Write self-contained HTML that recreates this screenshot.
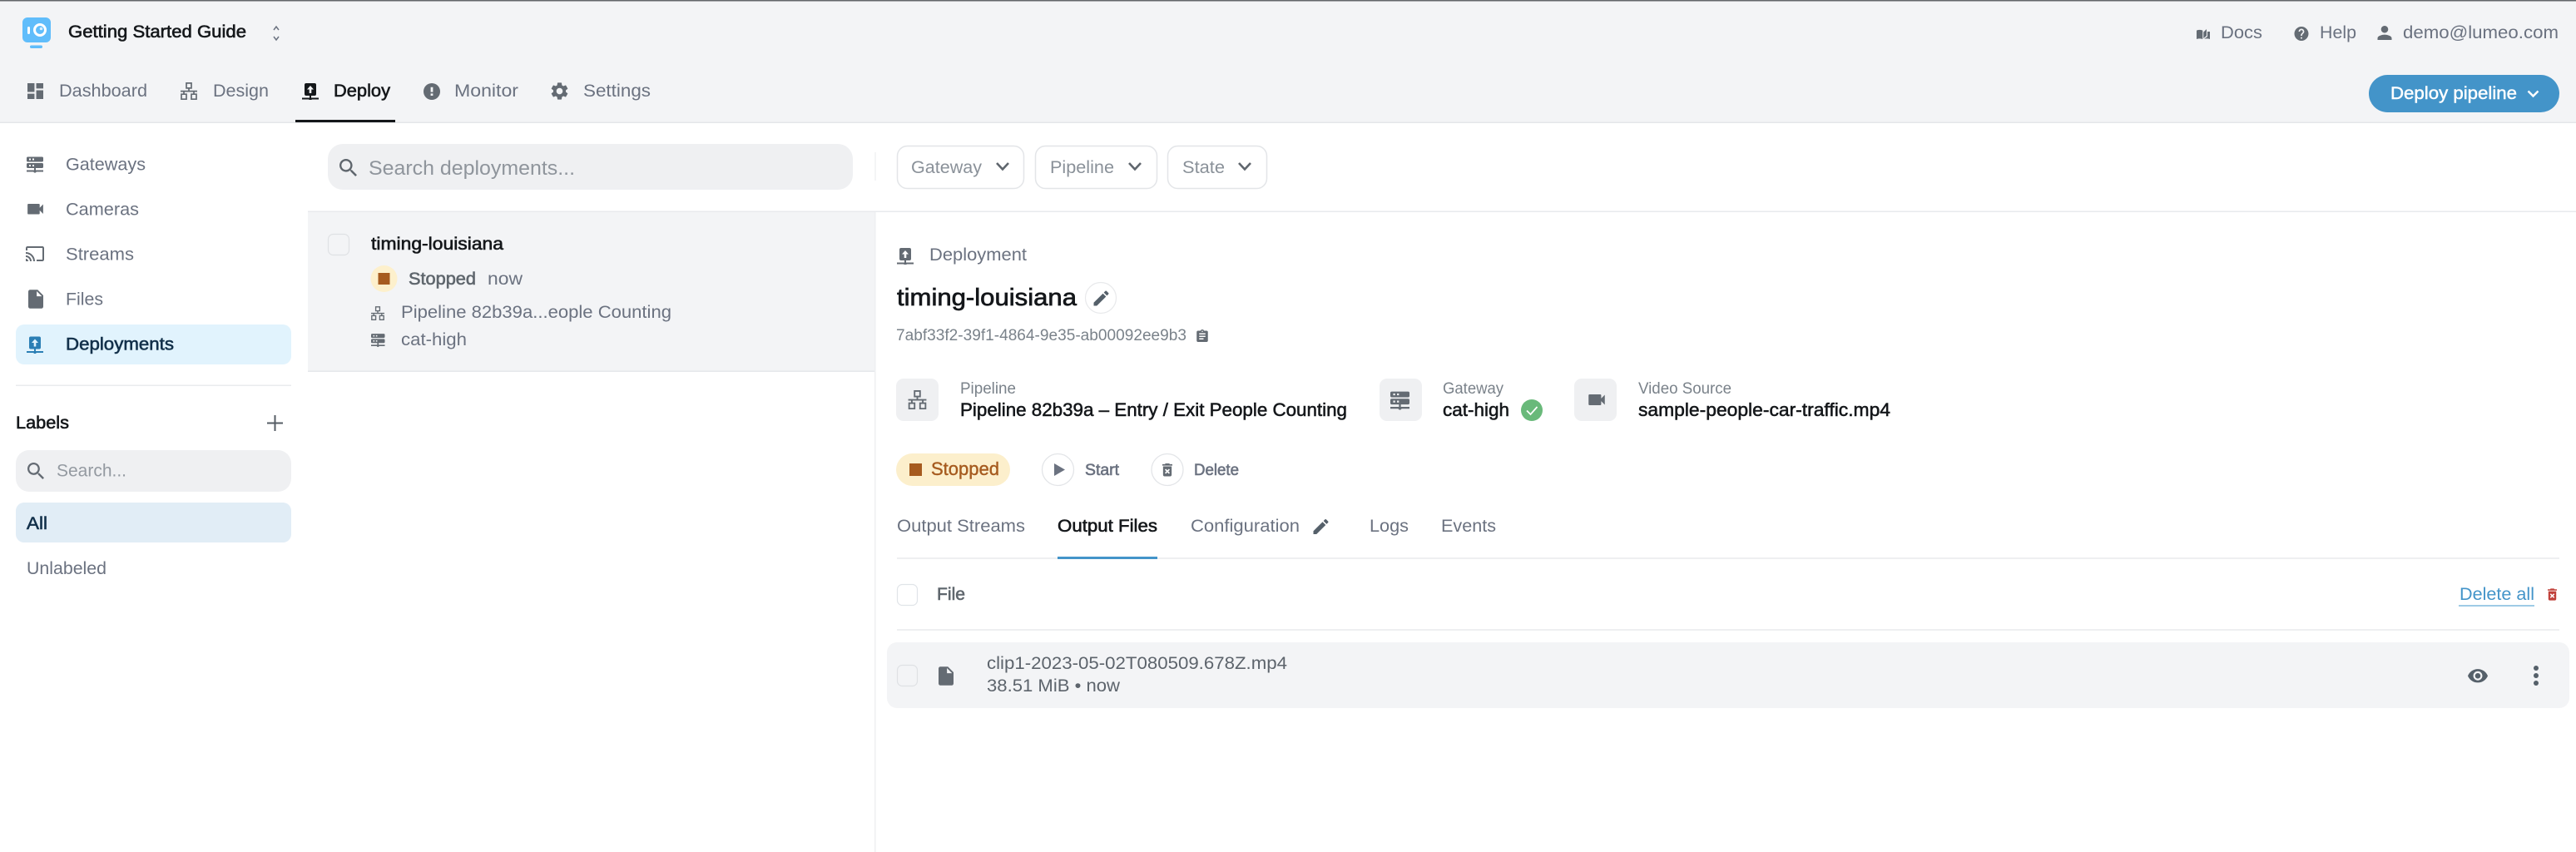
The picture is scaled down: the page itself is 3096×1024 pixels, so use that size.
<!DOCTYPE html>
<html lang="en"><head><meta charset="utf-8"><title>Deployments</title>
<style>
html,body{margin:0;padding:0;background:#fff;width:3096px;height:1024px;overflow:hidden}
svg{display:block}
text{font-family:"Liberation Sans",sans-serif;font-size:21px;fill:#6b7280}
.m{stroke-width:.6px;paint-order:stroke}
.d{fill:#14171a}.d.m{stroke:#14171a}
.g.m{stroke:#6b7280}
.s{font-size:19px}
.p{fill:#949aa1}
</style></head><body>
<svg width="3096" height="1024" viewBox="0 0 3096 1024" xmlns="http://www.w3.org/2000/svg">
<defs>
<symbol id="dash" viewBox="3 3 18 18"><path d="M3 13h8V3H3v10zm0 8h8v-6H3v6zm10 0h8V11h-8v10zm0-18v6h8V3h-8z"/></symbol>
<symbol id="deploy" viewBox="0 0 20 20"><path fill-rule="evenodd" d="M5 0h10a2 2 0 0 1 2 2v11a2 2 0 0 1-2 2h-4v2.5h9v2h-8.3a1.8 1.8 0 0 1-3.4 0H0v-2h9V15H5a2 2 0 0 1-2-2V2a2 2 0 0 1 2-2zm5 3L6 7.5h2.7V12h2.6V7.5H14z"/></symbol>
<symbol id="net" viewBox="0 0 20 21"><path fill="none" stroke="currentColor" stroke-width="1.7" d="M7 .9h6v6H7zM1 14.2h6v6H1zM13 14.2h6v6h-6zM10 6.9v3.7M0 10.6h20M4 10.6v3.6M16 10.6v3.6"/></symbol>
<symbol id="alert" viewBox="2 2 20 20"><path fill-rule="evenodd" d="M12 2a10 10 0 1 0 0 20 10 10 0 0 0 0-20zm1.4 15h-2.8v-2.6h2.8zm0-4.4h-2.8V6.8h2.8z"/></symbol>
<symbol id="gear" viewBox="2.5 2 19 20"><path fill-rule="evenodd" d="M19.14 12.94c.04-.3.06-.61.06-.94 0-.32-.02-.64-.07-.94l2.03-1.58c.18-.14.23-.41.12-.61l-1.92-3.32c-.12-.22-.37-.29-.59-.22l-2.39.96c-.5-.38-1.03-.7-1.62-.94l-.36-2.54c-.04-.24-.24-.41-.48-.41h-3.84c-.24 0-.43.17-.47.41l-.36 2.54c-.59.24-1.13.57-1.62.94l-2.39-.96c-.22-.08-.47 0-.59.22L2.74 8.87c-.12.21-.08.47.12.61l2.03 1.58c-.05.3-.09.63-.09.94s.02.64.07.94l-2.03 1.58c-.18.14-.23.41-.12.61l1.92 3.32c.12.22.37.29.59.22l2.39-.96c.5.38 1.03.7 1.62.94l.36 2.54c.05.24.24.41.48.41h3.84c.24 0 .44-.17.47-.41l.36-2.54c.59-.24 1.13-.56 1.62-.94l2.39.96c.22.08.47 0 .59-.22l1.92-3.32c.12-.22.07-.47-.12-.61l-2.01-1.58zM12 15.6c-1.98 0-3.6-1.62-3.6-3.6s1.62-3.6 3.6-3.6 3.6 1.62 3.6 3.6-1.62 3.6-3.6 3.6z"/></symbol>
<symbol id="help" viewBox="2 2 20 20"><path fill-rule="evenodd" d="M12 2C6.48 2 2 6.48 2 12s4.48 10 10 10 10-4.48 10-10S17.52 2 12 2zm1 17h-2v-2h2v2zm2.07-7.75l-.9.92C13.45 12.9 13 13.5 13 15h-2v-.5c0-1.1.45-2.1 1.17-2.83l1.24-1.26c.37-.36.59-.86.59-1.41 0-1.1-.9-2-2-2s-2 .9-2 2H8c0-2.21 1.79-4 4-4s4 1.79 4 4c0 .88-.36 1.68-.93 2.25z"/></symbol>
<symbol id="user" viewBox="4 4 16 16"><path d="M12 12c2.21 0 4-1.79 4-4s-1.79-4-4-4-4 1.79-4 4 1.79 4 4 4zm0 2c-2.67 0-8 1.34-8 4v2h16v-2c0-2.66-5.33-4-8-4z"/></symbol>
<symbol id="book" viewBox="0 0 16 12"><path fill-rule="evenodd" d="M0 1.6Q3.5.2 7.3 1.6V12Q3.5 10.8 0 12zM8.3 3.6 12 0v8l-3.7 3zM13 3h3v9q-3-1.2-7-.2L13 9z"/></symbol>
<symbol id="server" viewBox="0 0 20 19"><path fill-rule="evenodd" d="M1.5 0h17A1.5 1.5 0 0 1 20 1.5v3A1.5 1.5 0 0 1 18.5 6h-17A1.5 1.5 0 0 1 0 4.500v-3A1.500 1.500 0 0 1 1.500 0zM3 2v2h2V2zm4 0v2h2V2zM1.500 7.500h17A1.500 1.500 0 0 1 20 9v3a1.500 1.500 0 0 1-1.500 1.500H11V16h9v2h-8.300a1.800 1.800 0 0 1-3.400 0H0v-2h9v-2.500H1.500A1.500 1.500 0 0 1 0 12V9a1.500 1.500 0 0 1 1.500-1.500zM3 9.500v2h2v-2zm4 0v2h2v-2z"/></symbol>
<symbol id="cam" viewBox="3 6 18 12"><path d="M17 10.5V7c0-.55-.45-1-1-1H4c-.55 0-1 .45-1 1v10c0 .55.45 1 1 1h12c.55 0 1-.45 1-1v-3.500l4 4v-11l-4 4z"/></symbol>
<symbol id="cast" viewBox="1 3 22 18"><path d="M21 3H3c-1.100 0-2 .9-2 2v3h2V5h18v14h-7v2h7c1.100 0 2-.9 2-2V5c0-1.100-.9-2-2-2zM1 18v3h3c0-1.660-1.340-3-3-3zm0-4v2c2.760 0 5 2.240 5 5h2c0-3.870-3.130-7-7-7zm0-4v2c4.970 0 9 4.030 9 9h2c0-6.080-4.930-11-11-11z"/></symbol>
<symbol id="file" viewBox="4 2 16 20"><path fill-rule="evenodd" d="M6 2c-1.100 0-2 .9-2 2v16c0 1.100.9 2 2 2h12c1.100 0 2-.9 2-2V8l-6-6H6zm7 7V3.500L18.500 9H13z"/></symbol>
<symbol id="search" viewBox="3 3 17.500 17.500"><path fill-rule="evenodd" d="M15.500 14h-.79l-.28-.27C15.410 12.590 16 11.110 16 9.500 16 5.910 13.090 3 9.500 3S3 5.910 3 9.500 5.910 16 9.500 16c1.610 0 3.090-.59 4.230-1.570l.27.28v.79l5 4.990L20.490 19l-4.990-5zm-6 0C7.010 14 5 11.990 5 9.500S7.010 5 9.500 5 14 7.010 14 9.500 11.990 14 9.500 14z"/></symbol>
<symbol id="pencil" viewBox="3 3 18 18"><path d="M3 17.250V21h3.750L17.810 9.940l-3.750-3.750L3 17.250zM20.710 7.040c.39-.39.39-1.020 0-1.410l-2.340-2.340c-.39-.39-1.020-.39-1.410 0l-1.830 1.830 3.750 3.750 1.830-1.830z"/></symbol>
<symbol id="clip" viewBox="3 1 18 20"><path fill-rule="evenodd" d="M19 3h-4.180C14.400 1.840 13.300 1 12 1c-1.300 0-2.400.84-2.820 2H5c-1.100 0-2 .9-2 2v14c0 1.100.9 2 2 2h14c1.100 0 2-.9 2-2V5c0-1.100-.9-2-2-2zm-7 0c.55 0 1 .45 1 1s-.45 1-1 1-1-.45-1-1 .45-1 1-1zm2 14H7v-2h7v2zm3-4H7v-2h10v2zm0-4H7V7h10v2z"/></symbol>
<symbol id="trash" viewBox="5 3 14 18"><path fill-rule="evenodd" d="M6 19c0 1.100.9 2 2 2h8c1.100 0 2-.9 2-2V7H6v12zm2.460-7.120l1.410-1.410L12 12.590l2.120-2.120 1.410 1.410L13.410 14l2.120 2.120-1.410 1.410L12 15.410l-2.120 2.120-1.410-1.410L10.590 14l-2.130-2.120zM15.500 4l-1-1h-5l-1 1H5v2h14V4z"/></symbol>
<symbol id="eye" viewBox="1 4.500 22 15"><path fill-rule="evenodd" d="M12 4.500C7 4.500 2.730 7.610 1 12c1.730 4.390 6 7.500 11 7.500s9.270-3.110 11-7.500c-1.730-4.390-6-7.500-11-7.500zM12 17c-2.760 0-5-2.240-5-5s2.240-5 5-5 5 2.240 5 5-2.240 5-5 5zm0-8c-1.660 0-3 1.340-3 3s1.340 3 3 3 3-1.340 3-3-1.340-3-3-3z"/></symbol>
</defs>

<rect width="3096" height="1024" fill="#fff"/>
<!-- header -->
<rect width="3096" height="147" fill="#f3f4f6"/>
<rect width="3096" height="1.500" fill="#63666a"/>
<rect y="146.500" width="3096" height="1.500" fill="#e4e6e9"/>
<!-- logo -->
<rect x="27" y="21" width="34" height="30" rx="6" fill="#60bdfb"/>
<rect x="36" y="54.500" width="15" height="3.500" rx="1.700" fill="#60bdfb"/>
<rect x="33" y="32" width="3" height="9" rx="1.500" fill="#fff"/>
<circle cx="48" cy="36" r="6.500" fill="#60bdfb" stroke="#fff" stroke-width="3"/>
<circle cx="49.500" cy="34.500" r="1.800" fill="#d9f0ff"/>
<text x="82" y="45" class="d m" textLength="214" lengthAdjust="spacingAndGlyphs">Getting Started Guide</text>
<path d="M329 36l3-4 3 4M329 44l3 4 3-4" fill="none" stroke="#6b7280" stroke-width="1.500"/>

<!-- tabs -->
<g fill="#646b73" color="#646b73">
<use href="#dash" x="33" y="100" width="19" height="19"/>
<use href="#net" x="217" y="99" width="20" height="21"/>
<use href="#alert" x="509" y="100" width="20" height="20"/>
<use href="#gear" x="662" y="99" width="21" height="21"/>
<use href="#book" x="2640" y="35" width="16" height="12"/>
<use href="#help" x="2757" y="32" width="18" height="17"/>
<use href="#user" x="2857" y="31" width="18" height="17"/>
</g>
<use href="#deploy" x="363" y="100" width="20" height="20" fill="#14171a"/>
<text x="71" y="116" textLength="106" lengthAdjust="spacingAndGlyphs">Dashboard</text>
<text x="256" y="116" textLength="67" lengthAdjust="spacingAndGlyphs">Design</text>
<text x="401" y="116" class="d m" textLength="68" lengthAdjust="spacingAndGlyphs">Deploy</text>
<text x="546" y="116" textLength="77" lengthAdjust="spacingAndGlyphs">Monitor</text>
<text x="701" y="116" textLength="81" lengthAdjust="spacingAndGlyphs">Settings</text>
<rect x="355" y="144" width="120" height="3" fill="#14171a"/>

<text x="2669" y="46" textLength="50" lengthAdjust="spacingAndGlyphs">Docs</text>
<text x="2788" y="46" textLength="44" lengthAdjust="spacingAndGlyphs">Help</text>
<text x="2888" y="46" textLength="187" lengthAdjust="spacingAndGlyphs">demo@lumeo.com</text>
<rect x="2847" y="90" width="229" height="45" rx="22.500" fill="#4394c9"/>
<text x="2873" y="119" style="fill:#fff;stroke:#fff;stroke-width:.45px" textLength="152" lengthAdjust="spacingAndGlyphs">Deploy pipeline</text>
<path d="M3038.500 109.500l6 6 6-6" fill="none" stroke="#fff" stroke-width="2.400"/>

<!-- sidebar -->
<rect x="370" y="254" width="1" height="193" fill="#f2f3f4"/>
<g fill="#646b73">
<use href="#server" x="32" y="188" width="20" height="20"/>
<use href="#cam" x="33" y="245" width="19" height="12.500"/>
<use href="#cast" x="31" y="296" width="22" height="18"/>
<use href="#file" x="34" y="348" width="18" height="23"/>
</g>
<text x="79" y="204.500" textLength="96" lengthAdjust="spacingAndGlyphs">Gateways</text>
<text x="79" y="258.500" textLength="88" lengthAdjust="spacingAndGlyphs">Cameras</text>
<text x="79" y="312.500" textLength="82" lengthAdjust="spacingAndGlyphs">Streams</text>
<text x="79" y="366.500" textLength="45" lengthAdjust="spacingAndGlyphs">Files</text>
<rect x="19" y="390" width="331" height="48" rx="10" fill="#e1f3fd"/>
<use href="#deploy" x="32" y="404" width="20" height="21" fill="#2b7fb5"/>
<text x="79" y="420.500" style="fill:#12304a;stroke:#12304a;stroke-width:.6px" textLength="130" lengthAdjust="spacingAndGlyphs">Deployments</text>
<rect x="19" y="462.500" width="331" height="1.500" fill="#e9ebee"/>
<text x="19" y="515" class="d m" textLength="64" lengthAdjust="spacingAndGlyphs">Labels</text>
<path d="M321 508.500h19M330.500 499v19" stroke="#555c64" stroke-width="2" fill="none"/>
<rect x="19" y="541" width="331" height="50" rx="16" fill="#eff0f2"/>
<use href="#search" x="33" y="556" width="20" height="20" fill="#646b73"/>
<text x="68" y="572.500" class="p" textLength="84" lengthAdjust="spacingAndGlyphs">Search...</text>
<rect x="19" y="604" width="331" height="48" rx="10" fill="#e1edf6"/>
<text x="32" y="636" style="fill:#12304a;stroke:#12304a;stroke-width:.6px" textLength="25" lengthAdjust="spacingAndGlyphs">All</text>
<text x="32" y="690" textLength="96" lengthAdjust="spacingAndGlyphs">Unlabeled</text>

<!-- search row -->
<rect x="394" y="173" width="631" height="55" rx="18" fill="#eff0f2"/>
<use href="#search" x="408" y="191" width="21" height="21" fill="#5f666d"/>
<text x="443" y="210" class="p" style="font-size:24px;fill:#8f959c" textLength="248" lengthAdjust="spacingAndGlyphs">Search deployments...</text>
<rect x="1051.500" y="183" width="1" height="34" fill="#e9ebee"/>
<g fill="#fff" stroke="#e3e5e8" stroke-width="1.500">
<rect x="1078.500" y="175.500" width="152" height="51" rx="12"/>
<rect x="1244.500" y="175.500" width="146" height="51" rx="12"/>
<rect x="1403.500" y="175.500" width="119" height="51" rx="12"/>
</g>
<text x="1095" y="208" class="p" style="fill:#8a9199" textLength="85" lengthAdjust="spacingAndGlyphs">Gateway</text>
<text x="1262" y="208" class="p" style="fill:#8a9199" textLength="77" lengthAdjust="spacingAndGlyphs">Pipeline</text>
<text x="1421" y="208" class="p" style="fill:#8a9199" textLength="51" lengthAdjust="spacingAndGlyphs">State</text>
<path d="M1198 196l7 7.500 7-7.500M1357 196l7 7.500 7-7.500M1489 196l7 7.500 7-7.500" fill="none" stroke="#5f666d" stroke-width="2.600"/>
<rect x="370" y="253.500" width="2726" height="1.500" fill="#e8eaed"/>

<!-- list item -->
<rect x="370" y="255" width="681" height="191" fill="#f3f4f6"/>
<rect x="370" y="445.500" width="681" height="1.500" fill="#e6e8eb"/>
<rect x="1051" y="255" width="1.500" height="769" fill="#eeeff1"/>
<rect x="394.500" y="281.500" width="25" height="25" rx="6" fill="#f3f4f6" stroke="#dfe1e4" stroke-width="1.200"/>
<text x="446" y="300" class="d m" textLength="159" lengthAdjust="spacingAndGlyphs">timing-louisiana</text>
<circle cx="461.500" cy="335" r="16" fill="#fdf0cc"/>
<rect x="454.500" y="328" width="14" height="14" fill="#a65b1f"/>
<text x="491" y="342" style="stroke:#5f666d;stroke-width:.6px;fill:#5f666d" textLength="81" lengthAdjust="spacingAndGlyphs">Stopped</text>
<text x="586" y="342" textLength="42" lengthAdjust="spacingAndGlyphs">now</text>
<use href="#net" x="446" y="368" width="16" height="17" color="#646b73"/>
<text x="482" y="382" textLength="325" lengthAdjust="spacingAndGlyphs">Pipeline 82b39a...eople Counting</text>
<use href="#server" x="446" y="401" width="16.500" height="16" fill="#646b73"/>
<text x="482" y="415" textLength="79" lengthAdjust="spacingAndGlyphs">cat-high</text>

<!-- detail head -->
<use href="#deploy" x="1078" y="298" width="20" height="20" fill="#646b73"/>
<text x="1117" y="313" textLength="117" lengthAdjust="spacingAndGlyphs">Deployment</text>
<text x="1078" y="367" class="d" style="font-size:29px;stroke:#14171a;stroke-width:.7px" textLength="216" lengthAdjust="spacingAndGlyphs">timing-louisiana</text>
<circle cx="1323" cy="358" r="18.500" fill="#fff" stroke="#e8e9eb" stroke-width="1.200"/>
<use href="#pencil" x="1314.500" y="349.500" width="18" height="18" fill="#55606a"/>
<text x="1077" y="409" class="s" style="fill:#7a828a" textLength="349" lengthAdjust="spacingAndGlyphs">7abf33f2-39f1-4864-9e35-ab00092ee9b3</text>
<use href="#clip" x="1438" y="396" width="14" height="15" fill="#646b73"/>

<!-- info cards -->
<rect x="1077" y="455" width="51" height="51" rx="9" fill="#eff0f2"/>
<use href="#net" x="1091" y="469" width="23" height="23" color="#646b73"/>
<text x="1154" y="473" class="s" style="fill:#7a828a" textLength="67" lengthAdjust="spacingAndGlyphs">Pipeline</text>
<text x="1154" y="500" class="d" style="font-size:22px;stroke:#14171a;stroke-width:.55px" textLength="465" lengthAdjust="spacingAndGlyphs">Pipeline 82b39a – Entry / Exit People Counting</text>
<rect x="1658" y="455" width="51" height="51" rx="9" fill="#eff0f2"/>
<use href="#server" x="1671" y="470" width="23" height="23" fill="#646b73"/>
<text x="1734" y="473" class="s" style="fill:#7a828a" textLength="73" lengthAdjust="spacingAndGlyphs">Gateway</text>
<text x="1734" y="500" class="d" style="font-size:22px;stroke:#14171a;stroke-width:.55px" textLength="80" lengthAdjust="spacingAndGlyphs">cat-high</text>
<circle cx="1841" cy="493" r="13" fill="#69b97a"/>
<path d="M1835 493.500l4.500 4.500 8-9" fill="none" stroke="#fff" stroke-width="1.700"/>
<rect x="1892" y="455" width="51" height="51" rx="9" fill="#eff0f2"/>
<use href="#cam" x="1909" y="474" width="20" height="13" fill="#646b73"/>
<text x="1969" y="473" class="s" style="fill:#7a828a" textLength="112" lengthAdjust="spacingAndGlyphs">Video Source</text>
<text x="1969" y="500" class="d" style="font-size:22px;stroke:#14171a;stroke-width:.55px" textLength="303" lengthAdjust="spacingAndGlyphs">sample-people-car-traffic.mp4</text>

<!-- status + actions -->
<rect x="1077" y="545" width="137" height="39" rx="19.500" fill="#fcefcc"/>
<rect x="1093" y="557" width="15" height="15" fill="#a65b1f"/>
<text x="1119" y="571" style="font-size:22px;fill:#a65b1f;stroke:#a65b1f;stroke-width:.4px" textLength="82" lengthAdjust="spacingAndGlyphs">Stopped</text>
<circle cx="1271.500" cy="564.500" r="19" fill="#fff" stroke="#e3e5e8" stroke-width="1.300"/>
<path d="M1267 557l13 7.500-13 7.500z" fill="#6b7280"/>
<text x="1304" y="571" class="s g m" textLength="41" lengthAdjust="spacingAndGlyphs">Start</text>
<circle cx="1403" cy="564.500" r="19" fill="#fff" stroke="#e3e5e8" stroke-width="1.300"/>
<use href="#trash" x="1397" y="557" width="12" height="15.500" fill="#646b73"/>
<text x="1435" y="571" class="s g m" textLength="54" lengthAdjust="spacingAndGlyphs">Delete</text>

<!-- tabs -->
<text x="1078" y="639" textLength="154" lengthAdjust="spacingAndGlyphs">Output Streams</text>
<text x="1271" y="639" class="d m" textLength="120" lengthAdjust="spacingAndGlyphs">Output Files</text>
<text x="1431" y="639" textLength="131" lengthAdjust="spacingAndGlyphs">Configuration</text>
<use href="#pencil" x="1578" y="624" width="19" height="18" fill="#55606a"/>
<text x="1646" y="639" textLength="47" lengthAdjust="spacingAndGlyphs">Logs</text>
<text x="1732" y="639" textLength="66" lengthAdjust="spacingAndGlyphs">Events</text>
<rect x="1078" y="670" width="1998" height="2" fill="#eeeff1"/>
<rect x="1271" y="669" width="120" height="3" fill="#4394c9"/>

<!-- file table -->
<rect x="1078.500" y="702.500" width="24" height="25" rx="6" fill="#fff" stroke="#e0e4e8" stroke-width="1.200"/>
<text x="1126" y="721" style="fill:#5f666d;stroke:#5f666d;stroke-width:.6px" textLength="34" lengthAdjust="spacingAndGlyphs">File</text>
<text x="2956" y="721" style="fill:#4394c9" textLength="90" lengthAdjust="spacingAndGlyphs">Delete all</text>
<rect x="2955" y="727" width="91" height="2" fill="#9ecbe6"/>
<use href="#trash" x="3062" y="707" width="11" height="15" fill="#c0403a"/>
<rect x="1078" y="756" width="1998" height="2" fill="#eeeff1"/>
<rect x="1066" y="772" width="2022" height="79" rx="12" fill="#f3f4f6"/>
<rect x="1078.500" y="799.500" width="24" height="25" rx="6" fill="#f3f4f6" stroke="#dfe1e4" stroke-width="1.200"/>
<use href="#file" x="1128" y="801" width="18" height="23" fill="#646b73"/>
<text x="1186" y="804" style="fill:#5d646c" textLength="361" lengthAdjust="spacingAndGlyphs">clip1-2023-05-02T080509.678Z.mp4</text>
<text x="1186" y="831" style="fill:#5d646c" textLength="160" lengthAdjust="spacingAndGlyphs">38.51 MiB • now</text>
<use href="#eye" x="2966" y="804" width="24" height="16.500" fill="#55606a"/>
<g fill="#55606a"><circle cx="3048" cy="803" r="3"/><circle cx="3048" cy="812" r="3"/><circle cx="3048" cy="821" r="3"/></g>
</svg>
</body></html>
